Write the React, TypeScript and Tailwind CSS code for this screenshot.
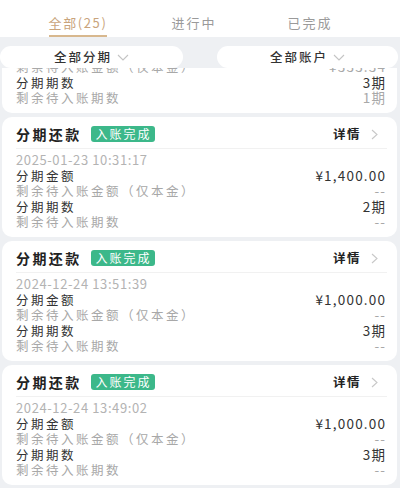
import React from "react";

type Row = { label: string; value: string; dark: boolean };
type Card = { date: string; rows: Row[] };

const FONT = { fontFamily: '"Noto Sans CJK SC", "Noto Sans", sans-serif' };

const cards: Card[] = [
  {
    date: "2025-02-10 09:12:45",
    rows: [
      { label: "分期金额", value: "¥1,000.00", dark: true },
      { label: "剩余待入账金额（仅本金）", value: "¥333.34", dark: false },
      { label: "分期期数", value: "3期", dark: true },
      { label: "剩余待入账期数", value: "1期", dark: false },
    ],
  },
  {
    date: "2025-01-23 10:31:17",
    rows: [
      { label: "分期金额", value: "¥1,400.00", dark: true },
      { label: "剩余待入账金额（仅本金）", value: "--", dark: false },
      { label: "分期期数", value: "2期", dark: true },
      { label: "剩余待入账期数", value: "--", dark: false },
    ],
  },
  {
    date: "2024-12-24 13:51:39",
    rows: [
      { label: "分期金额", value: "¥1,000.00", dark: true },
      { label: "剩余待入账金额（仅本金）", value: "--", dark: false },
      { label: "分期期数", value: "3期", dark: true },
      { label: "剩余待入账期数", value: "--", dark: false },
    ],
  },
  {
    date: "2024-12-24 13:49:02",
    rows: [
      { label: "分期金额", value: "¥1,000.00", dark: true },
      { label: "剩余待入账金额（仅本金）", value: "--", dark: false },
      { label: "分期期数", value: "3期", dark: true },
      { label: "剩余待入账期数", value: "--", dark: false },
    ],
  },
];

function ChevronDown() {
  return (
    <svg width="12" height="7" viewBox="0 0 12 7" className="ml-[5px]">
      <path d="M1 1 L6 6 L11 1" fill="none" stroke="#c4c4c4" strokeWidth="1.1" />
    </svg>
  );
}

function ChevronRight() {
  return (
    <svg width="7" height="11" viewBox="0 0 7 11">
      <path d="M1 1 L6 5.5 L1 10" fill="none" stroke="#c8c8c8" strokeWidth="1.1" />
    </svg>
  );
}

function CardView({ card }: { card: Card }) {
  return (
    <div className="ml-[2px] mr-[3px] h-[120px] shrink-0 rounded-[10px] bg-white">
      <div className="flex h-[31px] items-center pl-[14px] pr-[19px] pt-[3px]">
        <span className="text-[14px] font-bold leading-[18px] tracking-[2.4px] text-[#222]">分期还款</span>
        <span className="ml-[9px] h-[16px] rounded-[3px] bg-[#3cb88a] pl-[5px] pr-[3px] text-[12px] leading-[16px] tracking-[2px] text-white">
          入账完成
        </span>
        <span className="ml-auto text-[12.5px] font-bold leading-[18px] tracking-[1.5px] text-[#222]">详情</span>
        <span className="ml-[10px] flex items-center">
          <ChevronRight />
        </span>
      </div>
      <div className="ml-[14px] mr-[10px] h-px bg-[#f1f1f1]" />
      <div className="pl-[14px] pr-[12px] pt-[3px]">
        <div className="text-[13px] leading-[15.5px] tracking-[0.6px] text-[#b3b3b3]">{card.date}</div>
        {card.rows.map((r, i) => (
          <div key={i} className="flex items-center justify-between leading-[15.5px]">
            <span className={"text-[12.5px] tracking-[2.5px] " + (r.dark ? "text-[#333]" : "text-[#a8a8a8]")}>{r.label}</span>
            <span className={"-mr-[1.2px] text-[13.5px] tracking-[1.2px] " + (r.dark ? "text-[#333]" : "text-[#a8a8a8]")}>{r.value}</span>
          </div>
        ))}
      </div>
    </div>
  );
}

export default function App() {
  return (
    <div className="flex h-[488px] w-[400px] flex-col overflow-hidden bg-[#eef0f3]" style={FONT}>
      <div className="flex h-[37px] shrink-0 bg-white pl-[20px]">
        <div className="flex w-[116px] flex-col items-center pt-[14px]">
          <span className="text-[13px] leading-[18px] tracking-[1.6px] text-[#c9a47c]">全部(25)</span>
          <div className="mt-[3px] h-[2px] w-[58px] bg-[#d8b88e]" />
        </div>
        <div className="flex w-[116px] flex-col items-center pt-[14px]">
          <span className="text-[13px] leading-[18px] tracking-[2px] text-[#9a9a9a]">进行中</span>
        </div>
        <div className="flex w-[116px] flex-col items-center pt-[14px]">
          <span className="text-[13px] leading-[18px] tracking-[2px] text-[#9a9a9a]">已完成</span>
        </div>
      </div>
      <div className="flex h-[31px] shrink-0 gap-[34px] pt-[9px]">
        <div className="flex h-[22px] w-[183px] items-center justify-center rounded-full bg-white">
          <span className="text-[12.5px] font-medium tracking-[2px] text-[#333]">全部分期</span>
          <ChevronDown />
        </div>
        <div className="flex h-[22px] w-[181px] items-center justify-center rounded-full bg-white">
          <span className="text-[12.5px] font-medium tracking-[2px] text-[#333]">全部账户</span>
          <ChevronDown />
        </div>
      </div>
      <div className="flex-1 overflow-hidden">
        <div className="-mt-[75px] flex flex-col gap-[4px]">
          {cards.map((c, i) => (
            <CardView key={i} card={c} />
          ))}
        </div>
      </div>
    </div>
  );
}
